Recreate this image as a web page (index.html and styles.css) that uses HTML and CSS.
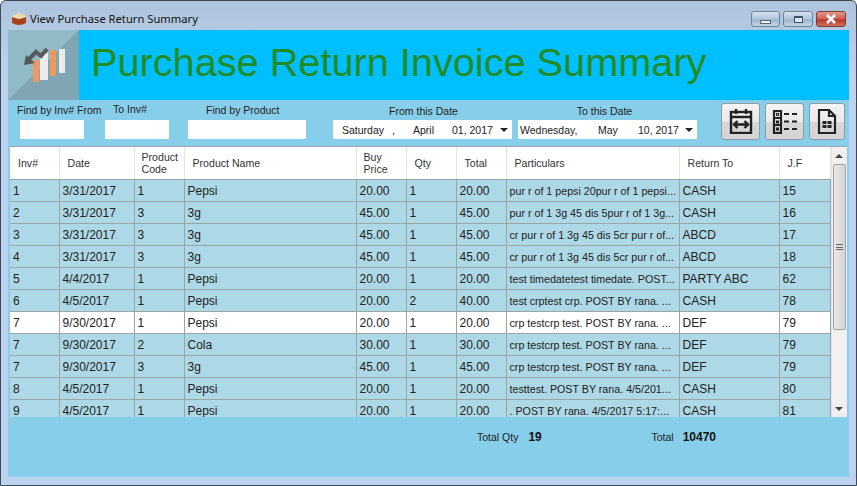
FILE: index.html
```html
<!DOCTYPE html>
<html lang="en">
<head>
    <meta charset="UTF-8">
    <title>View Purchase Return Summary</title>
    <link rel="stylesheet" href="styles.css">
</head>
<body>
    <div class="window">
        <div class="titlebar">
            <svg class="app-icon" width="16" height="16" viewBox="0 0 16 16">
                <path d="M1 6l7 2 7-2v6q-7 4-14 0z" fill="#a5431c"/>
                <path d="M1 6l7 2 7-2-2-3-2 1-3-3-3 3-2-1z" fill="#f1d9a6"/>
            </svg>
            <span class="title-text">View Purchase Return Summary</span>
            <div class="caption-btns">
                <div class="cap-btn cap-min"><span class="min-glyph"></span></div>
                <div class="cap-btn cap-max"><span class="max-glyph"></span></div>
                <div class="cap-btn cap-close">
                    <svg width="12" height="10" viewBox="0 0 12 10"><path d="M2 1l8 8M10 1l-8 8" stroke="#fff" stroke-width="2.6"/></svg>
                </div>
            </div>
        </div>

        <div class="content">
            <div class="banner">
                <svg class="logo" width="71" height="70" viewBox="0 0 71 70">
                    <rect width="71" height="70" fill="#7fa6b2"/>
                    <polygon points="0,0 71,0 0,70" fill="#90bac6"/>
                    <rect x="25" y="30" width="6" height="22" fill="#f0995c"/>
                    <rect x="32" y="23" width="8" height="27" fill="#ececec"/>
                    <rect x="42" y="20" width="6" height="26" fill="#f0995c"/>
                    <rect x="51" y="19" width="6" height="24" fill="#ececec"/>
                    <path d="M20 30l8-8 5 4 6-7" fill="none" stroke="#55585c" stroke-width="4"/>
                    <polygon points="16,35 18,25 27,33" fill="#55585c"/>
                </svg>
                <h1>Purchase Return Invoice Summary</h1>
            </div>

            <div class="filters">
                <div class="field field-from">
                    <label>Find by Inv# From</label>
                    <div class="input"></div>
                </div>
                <div class="field field-to">
                    <label>To Inv#</label>
                    <div class="input"></div>
                </div>
                <div class="field field-product">
                    <label>Find by Product</label>
                    <div class="input"></div>
                </div>
                <div class="field field-date">
                    <label>From this Date</label>
                    <div class="date date-from">
                        <span class="d-day">Saturday</span><span class="d-comma">,</span><span class="d-month">April</span><span class="d-num">01, 2017</span><i class="caret"></i>
                    </div>
                </div>
                <div class="field field-date field-date2">
                    <label>To this Date</label>
                    <div class="date date-to">
                        <span class="d-day">Wednesday,</span><span class="d-month">May</span><span class="d-num">10, 2017</span><i class="caret"></i>
                    </div>
                </div>
                <div class="tools">
                    <button class="tool tool-wide">
                        <svg width="24" height="25" viewBox="0 0 24 25" fill="none" stroke="#222" stroke-width="2.400">
                            <rect x="2" y="3" width="20" height="21"/>
                            <path d="M2 8h20M7 0v5M17 0v5"/>
                            <path d="M5 15.500h14M8.500 12l-3.500 3.500 3.500 3.500M15.500 12l3.500 3.500-3.500 3.500"/>
                        </svg>
                    </button>
                    <button class="tool tool-wide">
                        <svg width="26" height="24" viewBox="0 0 26 24" fill="none" stroke="#222" stroke-width="2.200">
                            <rect x="2" y="1" width="7" height="22"/>
                            <path d="M2 8h7M2 15h7"/>
                            <path d="M12 4h5M20 4h5M12 11.500h5M20 11.500h5M12 19h5M20 19h5"/>
                            <rect x="4.500" y="3.500" width="2" height="2" stroke-width="1"/>
                            <rect x="4.500" y="11" width="2" height="2" stroke-width="1"/>
                            <rect x="4.500" y="18" width="2" height="2" stroke-width="1"/>
                        </svg>
                    </button>
                    <button class="tool">
                        <svg width="20" height="25" viewBox="0 0 20 25" fill="none" stroke="#222" stroke-width="2.200">
                            <path d="M2 1h10l6 6v17H2z"/>
                            <path d="M12 1v6h6"/>
                            <path d="M5.500 12h9v7h-9z" fill="#222" stroke="none"/>
                            <path d="M10 12v7M5.500 15.500h9" stroke="#ddd" stroke-width="1"/>
                        </svg>
                    </button>
                </div>
            </div>

            <div class="grid-wrap">
                <table class="grid">
                    <colgroup>
                        <col class="c-inv"><col class="c-date"><col class="c-code"><col class="c-name"><col class="c-price"><col class="c-qty"><col class="c-total"><col class="c-part"><col class="c-ret"><col class="c-jf">
                    </colgroup>
                    <thead>
                        <tr>
                            <th>Inv#</th><th>Date</th><th class="th-tight">Product<br>Code</th><th>Product Name</th><th class="th-tight">Buy<br>Price</th><th>Qty</th><th>Total</th><th>Particulars</th><th>Return To</th><th>J.F</th>
                        </tr>
                    </thead>
                    <tbody>
                        <tr><td>1</td><td>3/31/2017</td><td>1</td><td>Pepsi</td><td>20.00</td><td>1</td><td>20.00</td><td>pur r of 1 pepsi 20pur r of 1 pepsi...</td><td>CASH</td><td>15</td></tr>
                        <tr><td>2</td><td>3/31/2017</td><td>3</td><td>3g</td><td>45.00</td><td>1</td><td>45.00</td><td>pur r of 1 3g 45 dis 5pur r of 1 3g...</td><td>CASH</td><td>16</td></tr>
                        <tr><td>3</td><td>3/31/2017</td><td>3</td><td>3g</td><td>45.00</td><td>1</td><td>45.00</td><td>cr pur r of 1 3g 45 dis 5cr pur r of...</td><td>ABCD</td><td>17</td></tr>
                        <tr><td>4</td><td>3/31/2017</td><td>3</td><td>3g</td><td>45.00</td><td>1</td><td>45.00</td><td>cr pur r of 1 3g 45 dis 5cr pur r of...</td><td>ABCD</td><td>18</td></tr>
                        <tr><td>5</td><td>4/4/2017</td><td>1</td><td>Pepsi</td><td>20.00</td><td>1</td><td>20.00</td><td>test timedatetest timedate. POST...</td><td>PARTY ABC</td><td>62</td></tr>
                        <tr><td>6</td><td>4/5/2017</td><td>1</td><td>Pepsi</td><td>20.00</td><td>2</td><td>40.00</td><td>test crptest crp. POST BY rana. ...</td><td>CASH</td><td>78</td></tr>
                        <tr class="selected"><td>7</td><td>9/30/2017</td><td>1</td><td>Pepsi</td><td>20.00</td><td>1</td><td>20.00</td><td>crp testcrp test. POST BY rana. ...</td><td>DEF</td><td>79</td></tr>
                        <tr><td>7</td><td>9/30/2017</td><td>2</td><td>Cola</td><td>30.00</td><td>1</td><td>30.00</td><td>crp testcrp test. POST BY rana. ...</td><td>DEF</td><td>79</td></tr>
                        <tr><td>7</td><td>9/30/2017</td><td>3</td><td>3g</td><td>45.00</td><td>1</td><td>45.00</td><td>crp testcrp test. POST BY rana. ...</td><td>DEF</td><td>79</td></tr>
                        <tr><td>8</td><td>4/5/2017</td><td>1</td><td>Pepsi</td><td>20.00</td><td>1</td><td>20.00</td><td>testtest. POST BY rana. 4/5/201...</td><td>CASH</td><td>80</td></tr>
                        <tr class="last"><td>9</td><td>4/5/2017</td><td>1</td><td>Pepsi</td><td>20.00</td><td>1</td><td>20.00</td><td>. POST BY rana. 4/5/2017 5:17:...</td><td>CASH</td><td>81</td></tr>
                    </tbody>
                </table>
                <div class="scrollbar">
                    <div class="sb-btn"><i class="sb-up"></i></div>
                    <div class="sb-track"><div class="sb-thumb"><span class="grip"></span></div></div>
                    <div class="sb-btn"><i class="sb-down"></i></div>
                </div>
            </div>

            <div class="totals">
                <span class="t-label">Total Qty</span><b class="t-value t-qty-v">19</b>
                <span class="t-label">Total</span><b class="t-value t-sum-v">10470</b>
            </div>
        </div>
    </div>
</body>
</html>
```

FILE: styles.css
```css
* { box-sizing: border-box; }
html, body { margin: 0; height: 100%; }
body { font-family: "Liberation Sans", Arial, sans-serif; font-size: 12px; color: #222; overflow: hidden; }

.window {
    width: 857px;
    height: 486px;
    display: flex;
    flex-direction: column;
    padding: 0 8px 8px;
    background: linear-gradient(#aec4dc, #bcd2ee 80px);
    border: 1px solid #3b4a55;
    border-radius: 6px 6px 0 0;
}
.titlebar { height: 29px; flex: none; display: flex; align-items: center; position: relative; margin-left: 2px; }
.app-icon { margin-right: 3px; margin-top: 6px; }
.title-text { font-family: "Noto Sans", sans-serif; font-size: 11.2px; color: #111; margin-top: 6px; }
.caption-btns { margin-left: auto; margin-right: 2px; display: flex; gap: 3px; align-self: flex-start; margin-top: 10px; }
.cap-btn { height: 16px; border: 1px solid #6f8299; border-radius: 3px; display: flex; align-items: center; justify-content: center; background: linear-gradient(#d6e2ef, #aec3da 50%, #9cb4cc 55%, #c3d6e8); }
.cap-min { width: 29px; }
.cap-max { width: 30px; }
.cap-close { width: 30px; background: linear-gradient(#e29a8c, #cf5f4e 50%, #b5382b 55%, #d0705e); border-color: #7a3c35; }
.min-glyph { width: 11px; height: 4px; margin-top: 5px; background: #eef3f8; border: 1px solid #52677d; }
.max-glyph { width: 9px; height: 7px; border: 1px solid #3f5369; border-top-width: 2px; background: #dfe8f2; }

.content { flex: 1; display: flex; flex-direction: column; background: #87ceeb; margin-left: -1px; margin-right: -1px; }
.banner { height: 70px; flex: none; background: #00bfff; display: flex; align-items: center; }
.logo { flex: none; display: block; }
.banner h1 { margin: -6px 0 0 12px; font-weight: normal; font-size: 39.7px; color: #228b22; white-space: nowrap; }

.filters { height: 46px; flex: none; display: flex; align-items: flex-start; padding-left: 9px; }
.field label { display: block; white-space: nowrap; height: 20px; line-height: 20px; font-size: 10.5px; }
.input { height: 19px; background: #fff; }
.field-from { width: 88px; }
.field-from .input { width: 64px; margin-left: 3px; }
.field-to { width: 64px; }
.field-to label { padding-left: 8px; height: 19px; line-height: 19px; margin-bottom: 1px; }
.field-product { width: 118px; margin-left: 19px; }
.field-product label { padding-left: 18px; }
.field-date { width: 179px; margin-left: 27px; text-align: center; }
.field-date label { padding: 1px 0 0 2px; }
.field-date2 { margin-left: 6px; }
.field-date2 label { padding: 1px 6px 0 0; }
.date { height: 19px; background: #fff; display: flex; align-items: center; position: relative; font-size: 10.5px; white-space: nowrap; text-align: left; }
.date-from .d-day { margin-left: 9px; width: 50px; }
.date-from .d-comma { width: 21px; }
.date-from .d-month { width: 39px; }
.date-to .d-day { margin-left: 2px; width: 78px; }
.date-to .d-month { width: 40px; }
.caret { position: absolute; right: 4px; top: 8px; border: 4px solid transparent; border-top-color: #222; border-bottom: 0; }

.tools { display: flex; gap: 5px; margin: 3px 0 0 24px; }
.tool { width: 36px; height: 37px; padding: 0; display: flex; align-items: center; justify-content: center; border: 1px solid #8e9aa3; border-radius: 3px; background: linear-gradient(#f4f4f4, #eaeaea 50%, #d8d8d8 52%, #d4d4d4); }
.tool-wide { width: 39px; }

.grid-wrap { height: 271px; flex: none; margin: 0 2px; display: flex; border-top: 1px solid #9aa6ac; background: #fff; overflow: hidden; }
.grid { width: 820px; flex: none; table-layout: fixed; border-collapse: collapse; }
.c-inv { width: 49px; }
.c-date { width: 75px; }
.c-code { width: 50px; }
.c-name { width: 172px; }
.c-price { width: 50px; }
.c-qty { width: 50px; }
.c-total { width: 50px; }
.c-part { width: 173px; }
.c-ret { width: 100px; }
.c-jf { width: 51px; }
.grid th { height: 32px; padding: 1px 0 0 8px; text-align: left; font-weight: normal; font-size: 10.6px; line-height: 12px; color: #333; background: #fff; border-right: 1px solid #e4e4e4; border-bottom: 1px solid #9aa5a8; }
.grid th.th-tight { padding-left: 7px; }
.grid td { height: 22px; padding: 2px 0 0 3px; white-space: nowrap; overflow: hidden; background: #add8e6; border-right: 1px solid #9aa5a8; border-bottom: 1px solid #9aa5a8; font-size: 12px; }
.grid td:nth-child(8) { font-size: 10.7px; }
.grid tr.selected td { background: #fff; }
.grid tr.last td { border-bottom: 0; }

.scrollbar { flex: 1; display: flex; flex-direction: column; background: #f0f0f0; border-left: 1px solid #e4e4e4; }
.sb-btn { height: 17px; flex: none; display: flex; align-items: center; justify-content: center; }
.sb-up { border: 4px solid transparent; border-bottom-color: #444; border-top: 0; }
.sb-down { border: 4px solid transparent; border-top-color: #444; border-bottom: 0; }
.sb-track { flex: 1; background: #f1f1f1; }
.sb-thumb { height: 166px; margin: 0 1px; border: 1px solid #a3a3a3; border-radius: 2px; background: linear-gradient(90deg, #e8e8e8, #d4d4d4); display: flex; align-items: center; justify-content: center; }
.grip { width: 7px; height: 6px; border-top: 1px solid #666; border-bottom: 1px solid #666; background: linear-gradient(#666, #666) center / 100% 1px no-repeat; }

.totals { flex: 1; display: flex; align-items: flex-start; padding: 13px 0 0 469px; }
.t-label { font-size: 10.5px; line-height: 14px; color: #222; }
.t-value { margin-left: 10px; font-size: 12px; line-height: 14px; color: #111; }
.t-qty-v { width: 123px; }
.t-sum-v { margin-left: 9px; }
```
